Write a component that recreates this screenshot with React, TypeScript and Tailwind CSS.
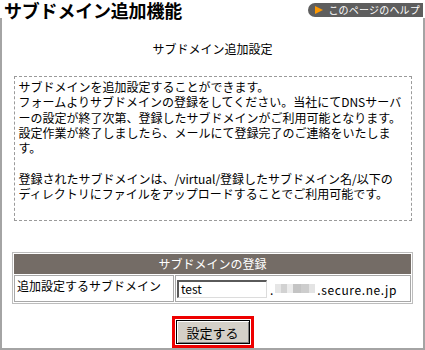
import React from "react";

const jp = { fontFamily: '"Noto Sans CJK JP", "Noto Sans", sans-serif' };

const introLines = [
  "サブドメインを追加設定することができます。",
  "フォームよりサブドメインの登録をしてください。当社にてDNSサーバ",
  "ーの設定が終了次第、登録したサブドメインがご利用可能となります。",
  "設定作業が終了しましたら、メールにて登録完了のご連絡をいたしま",
  "す。",
  "",
  "登録されたサブドメインは、/virtual/登録したサブドメイン名/以下の",
  "ディレクトリにファイルをアップロードすることでご利用可能です。",
];

function HelpButton() {
  return (
    <div className="flex h-[14px] items-center rounded-l-[7px] bg-[#5e5e5e] pl-[7px] pr-[3px] text-[10px] leading-none text-white">
      <span className="mr-[5px] h-0 w-0 border-y-[4px] border-l-[8px] border-y-transparent border-l-[#ff9900]" />
      <span className="tracking-[0.2px]">このページのヘルプ</span>
    </div>
  );
}

function BlurredName() {
  // ぼかし処理された部分
  return (
    <span className="mx-[2px] inline-flex h-[9px] items-stretch">
      <span className="w-[6px] bg-[#e6e6e6]" />
      <span className="w-[6px] bg-[#d2d2d2]" />
      <span className="w-[6px] bg-[#ececec]" />
      <span className="w-[8px] bg-[#c4c4c4]" />
      <span className="w-[8px] bg-[#cdcdcd]" />
      <span className="w-[6px] bg-[#e4e4e4]" />
    </span>
  );
}

export default function App() {
  return (
    <div className="h-[350px] w-[425px] bg-white text-black" style={jp}>
      <div className="flex h-[18px] items-start justify-between">
        <h1 className="ml-[4px] text-[18px] font-bold leading-[20px] tracking-[-0.2px]">
          サブドメイン追加機能
        </h1>
        <div className="mt-[3px] mr-[2px]">
          <HelpButton />
        </div>
      </div>

      <div className="flex h-[332px] flex-col items-center border-x-2 border-b-2 border-[#a4a4a4]">
        <p className="mt-[23px] text-[12px] leading-[16px]">サブドメイン追加設定</p>

        <div className="mt-[19px] w-[398px] border border-dashed border-[#9a9a9a] pl-[4px] pt-[2px] pb-[19px] text-[12px] leading-[15.3px]">
          {introLines.map((line, i) => (
            <div key={i} className="h-[15.3px] whitespace-nowrap">
              {line}
            </div>
          ))}
        </div>

        <div className="mt-[31px] w-[401px] border border-[#bdbdbd] bg-white p-[1px] text-[12px]">
          <div className="flex h-[20px] items-center justify-center bg-[#746c66] text-white">
            サブドメインの登録
          </div>
          <div className="mt-[1px] grid grid-cols-[160px_1fr] gap-[1px]">
            <div className="h-[27px] border border-[#a8a8a8] pl-[2px] pt-[1px] leading-[18px]">
              追加設定するサブドメイン
            </div>
            <div className="flex h-[27px] items-center border border-[#a8a8a8] pl-[1px]">
              <div className="flex h-[18px] w-[90px] items-center border-l-2 border-t-2 border-b border-r border-l-[#5a5a5a] border-t-[#5a5a5a] border-b-[#dcdcdc] border-r-[#dcdcdc] bg-white pl-[2px] text-[12px]">
                test
              </div>
              <span className="ml-[3px] mt-[3px]">.</span>
              <BlurredName />
              <span className="mt-[3px] tracking-[0.6px]">.secure.ne.jp</span>
            </div>
          </div>
        </div>

        <div className="mt-[12px] border-[3px] border-[#ee0000] p-[1px]">
          <button className="flex h-[24px] w-[74px] items-center justify-center border border-black bg-[#d4d0c8] text-[13px] shadow-[inset_1px_1px_0_#ffffff,inset_-1px_-1px_0_#808080]">
            設定する
          </button>
        </div>
      </div>
    </div>
  );
}
